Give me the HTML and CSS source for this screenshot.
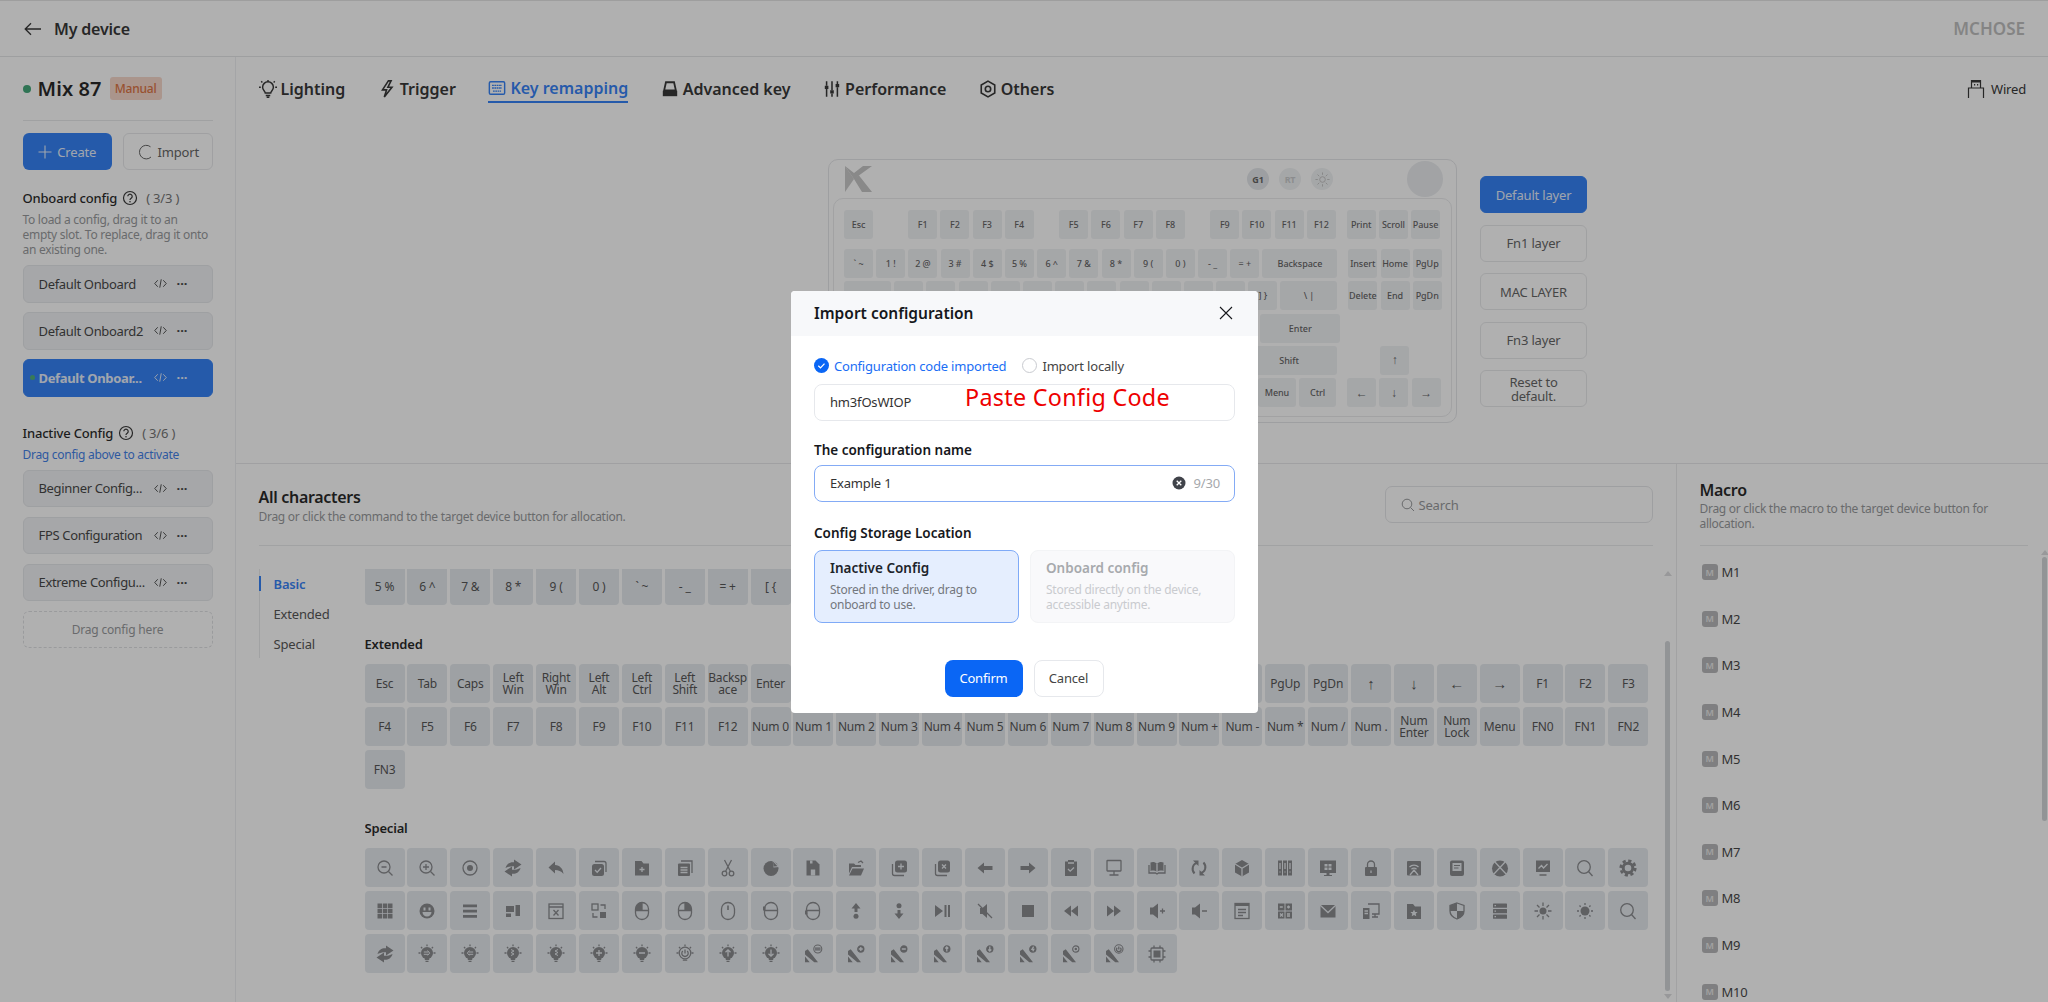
FILE: index.html
```html
<!DOCTYPE html>
<html lang="en">
<head>
<meta charset="utf-8">
<title>My device</title>
<link rel="stylesheet" href="styles.css">
</head>
<body>
<svg class="sprite" xmlns="http://www.w3.org/2000/svg">
  <symbol id="zo" viewBox="0 0 20 20"><g class="ln"><circle cx="9" cy="9" r="6"/><path d="M6.500 9h5M13.500 13.500l4 4"/></g></symbol>
  <symbol id="zi" viewBox="0 0 20 20"><g class="ln"><circle cx="9" cy="9" r="6"/><path d="M6 9h6M9 6v6M13.500 13.500l4 4"/></g></symbol>
  <symbol id="rec" viewBox="0 0 20 20"><circle class="ln" cx="10" cy="10" r="7"/><circle cx="10" cy="10" r="3"/></symbol>
  <symbol id="swirl" viewBox="0 0 20 20"><path d="M2.500 10C3.500 5.500 7.500 3.800 11 4.300V1.500L18.500 6.500 11 11.500V8.200C8 8 5.500 8.500 2.500 10z"/><path d="M17.500 10c-1 4.500-5 6.200-8.500 5.700v2.800L1.500 13.500 9 8.500v3.300c3 .2 5.500-.3 8.500-1.800z"/></symbol>
  <symbol id="reply" viewBox="0 0 20 20"><path d="M9 3.500 2.500 9.500 9 15.500V12c3.500 0 6 1 8.500 4-.5-5.500-3.500-8.500-8.500-9z"/></symbol>
  <symbol id="copychk" viewBox="0 0 20 20"><path class="ln" d="M6 3.500h9a2 2 0 0 1 2 2V14"/><rect x="3" y="6" width="12" height="12" rx="2.500"/><path class="kl" d="M6 12l2.200 2.200L12 10"/></symbol>
  <symbol id="fileplus" viewBox="0 0 20 20"><path d="M3 3h6.500l2 2.500H17V17.500H3z"/><path class="kl" d="M7.500 11.500h5M10 9v5"/></symbol>
  <symbol id="doclines" viewBox="0 0 20 20"><path class="ln" d="M6 3h11v12"/><rect x="3" y="5.500" width="12" height="12.500" rx="1"/><path class="kl" d="M5.500 9.500h7M5.500 12h7M5.500 14.500h7"/></symbol>
  <symbol id="scissors" viewBox="0 0 20 20"><g class="ln"><circle cx="6.500" cy="15.500" r="2.300"/><circle cx="13.500" cy="15.500" r="2.300"/><path d="M7.500 13.500 13.500 2M12.500 13.500 6.500 2"/></g></symbol>
  <symbol id="pie" viewBox="0 0 20 20"><circle cx="10" cy="10.500" r="7.500"/><path class="kf" d="M11.500 1.500l7 7.500-6 .5z"/><path d="M12 3.500l4.500 4.800-4 .2z"/></symbol>
  <symbol id="save" viewBox="0 0 20 20"><path d="M3.500 2.500h9l4 4v11h-13z"/><path class="kf" d="M7 2.500h2.500v3H7zM7.800 11.500h4.400v6H7.800z"/></symbol>
  <symbol id="folderopen" viewBox="0 0 20 20"><path d="M3 5.500h5l1.500 1.500H15v2H6l-3 6.500z"/><path d="M6.500 10.500H18l-3 7H3z"/><path class="ln" d="M12 4.500l3-1.500 2 2"/></symbol>
  <symbol id="addstack" viewBox="0 0 20 20"><path class="ln" d="M3.500 6v9.500a2 2 0 0 0 2 2H15"/><rect x="6" y="2.500" width="12" height="12" rx="2.500"/><path class="kl" d="M9 8.500h6M12 5.500v6"/></symbol>
  <symbol id="closestack" viewBox="0 0 20 20"><path class="ln" d="M3.500 6v9.500a2 2 0 0 0 2 2H15"/><rect x="6" y="2.500" width="12" height="12" rx="2.500"/><path class="kl" d="M10 6.500l4 4M14 6.500l-4 4"/></symbol>
  <symbol id="aleft" viewBox="0 0 20 20"><path d="M9 4.500V8h8.500v4H9v3.500L2.500 10z"/></symbol>
  <symbol id="aright" viewBox="0 0 20 20"><path d="M11 4.500V8H2.500v4H11v3.500l6.500-5.500z"/></symbol>
  <symbol id="clipchk" viewBox="0 0 20 20"><path d="M4 3.500h3V2h6v1.500h3V18H4z"/><path class="kl" d="M7 11l2.200 2.200L13 9.500M7 5h6"/></symbol>
  <symbol id="monitor" viewBox="0 0 20 20"><g class="ln"><rect x="3" y="2.500" width="14" height="10.500" rx=".5"/><path d="M10 13v3.500M5.500 17h9"/></g></symbol>
  <symbol id="book" viewBox="0 0 20 20"><path d="M10 5.500C8 3.800 5.500 3.500 3.500 4.500V13c2-.8 4.500-.6 6.500 1 2-1.600 4.500-1.800 6.500-1V4.500c-2-1-4.500-.7-6.500 1z"/><path class="ln" d="M2 7v8h6.500l1.500 1 1.500-1H18V7"/><path class="kl" d="M10 5.500V14"/></symbol>
  <symbol id="refresh" viewBox="0 0 20 20"><path d="M5.500 15.500C2 11.500 3.500 5.500 9 4.800" fill="none" stroke="currentColor" stroke-width="2"/><path d="M14.500 4.500C18 8.500 16.500 14.500 11 15.200" fill="none" stroke="currentColor" stroke-width="2"/><path d="M4 2.500h5.500v5.500zM16 17.500h-5.500V12z"/></symbol>
  <symbol id="cube" viewBox="0 0 20 20"><path d="M10 2l7 4v8.500L10 18.500 3 14.500V6z"/><path class="kl" d="M3 6l7 4.200L17 6M10 10.200v8.300"/></symbol>
  <symbol id="binders" viewBox="0 0 20 20"><path d="M3 2.500h4v15H3zM8 2.500h4v15H8zM13 2.500h4v15h-4z"/><path class="kl" d="M5 5v6M10 5v6M15 5v6M5 13.500v1M10 13.500v1M15 13.500v1"/></symbol>
  <symbol id="monwin" viewBox="0 0 20 20"><path d="M2 2.500h16v12.500H2zM8.500 15h3v2h2.500v1H6v-1h2.500z"/><path class="kf" d="M6.500 6h3v2.500h-3zM10.500 6h3v2.500h-3zM6.500 9.500h3V12h-3zM10.500 9.500h3V12h-3z"/></symbol>
  <symbol id="lock" viewBox="0 0 20 20"><path class="ln" d="M6.500 10V6.500a3.500 3.500 0 0 1 7 0V10"/><rect x="4" y="9" width="12" height="9" rx="1"/><path class="kl" d="M10 12.500v2.500"/></symbol>
  <symbol id="wificard" viewBox="0 0 20 20"><rect x="3" y="3" width="14" height="14.500" rx="1"/><path class="kl" d="M5.500 9a6.500 6.500 0 0 1 9 0M7.500 11.200a3.500 3.500 0 0 1 5 0M6 17l4-5 4 5"/></symbol>
  <symbol id="drawer" viewBox="0 0 20 20"><rect x="3" y="2.500" width="14" height="15.500" rx="2"/><path class="kf" d="M5.500 5h9v8h-9z"/><path d="M7 7h6v1H7zM7 9.500h4.500v1H7z"/></symbol>
  <symbol id="xbox" viewBox="0 0 20 20"><circle cx="10" cy="10.500" r="8"/><path class="kl" d="M4 3l6 6.500L16 3M3 17l7-7.500 7 7.500"/></symbol>
  <symbol id="chartmon" viewBox="0 0 20 20"><path d="M3 2.500h14v11.500H3z"/><path class="ln" d="M6.500 17h7"/><path class="kl" d="M5.500 10.500l3-3 2 2.500 4-4"/></symbol>
  <symbol id="search" viewBox="0 0 20 20"><g class="ln"><circle cx="9" cy="9" r="6.300"/><path d="M13.500 13.500l4 4.500"/></g></symbol>
  <symbol id="gear" viewBox="0 0 20 20"><circle cx="10" cy="10" r="4.800" fill="none" stroke="currentColor" stroke-width="3"/><circle cx="10" cy="10" r="7.300" fill="none" stroke="currentColor" stroke-width="2.600" stroke-dasharray="3.200 2.530"/></symbol>
  <symbol id="grid" viewBox="0 0 20 20"><path d="M2.500 2.500h4.500v4.500H2.500zM7.800 2.500h4.500v4.500H7.800zM13 2.500h4.500v4.500H13zM2.500 7.800h4.500v4.500H2.500zM7.800 7.800h4.500v4.500H7.800zM13 7.800h4.500v4.500H13zM2.500 13h4.500v4.500H2.500zM7.800 13h4.500v4.500H7.800zM13 13h4.500v4.500H13z"/></symbol>
  <symbol id="smile" viewBox="0 0 20 20"><circle cx="10" cy="10" r="7.500"/><path class="kf" d="M6.500 6.500h2v3h-2zM11.500 6.500h2v3h-2zM5.500 11h9a4.500 4.500 0 0 1-9 0z"/></symbol>
  <symbol id="bars" viewBox="0 0 20 20"><path d="M3 3.500h14v2.800H3zM3 8.800h14v2.800H3zM3 14h14v2.800H3z"/></symbol>
  <symbol id="layout" viewBox="0 0 20 20"><path d="M3 5h8v6H3zM12.500 4H17v11h-4.500zM3 12.500h5V16H3z"/></symbol>
  <symbol id="winx" viewBox="0 0 20 20"><g class="ln"><rect x="3" y="3" width="14" height="14.500"/><path d="M3 6h14M7.500 9l5 5.500M12.500 9l-5 5.500"/></g></symbol>
  <symbol id="swap" viewBox="0 0 20 20"><rect class="ln" x="3" y="3" width="6" height="6"/><rect x="11" y="11" width="6" height="6"/><path class="ln" d="M11.500 4h4.500v4M8.500 16H4v-4"/></symbol>
  <symbol id="mousel" viewBox="0 0 20 20"><rect class="ln" x="3.500" y="1.500" width="13" height="17" rx="6.500"/><path class="ln" d="M3.500 9.500h13M10 1.500v8"/><path d="M10 1.500v8H3.500V8A6.500 6.500 0 0 1 10 1.500z"/></symbol>
  <symbol id="mouser" viewBox="0 0 20 20"><rect class="ln" x="3.500" y="1.500" width="13" height="17" rx="6.500"/><path class="ln" d="M3.500 9.500h13M10 1.500v8"/><path d="M10 1.500v8h6.500V8A6.500 6.500 0 0 0 10 1.500z"/></symbol>
  <symbol id="mousem" viewBox="0 0 20 20"><rect class="ln" x="3.500" y="1.500" width="13" height="17" rx="6.500"/><rect x="9.200" y="4.500" width="1.600" height="4.500"/></symbol>
  <symbol id="mouseb" viewBox="0 0 20 20"><rect class="ln" x="3.500" y="1.500" width="13" height="17" rx="6.500"/><path class="ln" d="M3.500 9.500h13"/><rect x="2" y="5.500" width="2.500" height="4"/></symbol>
  <symbol id="mousef" viewBox="0 0 20 20"><rect class="ln" x="3.500" y="1.500" width="13" height="17" rx="6.500"/><path class="ln" d="M3.500 9.500h13"/><rect x="2" y="9.500" width="2.500" height="4"/></symbol>
  <symbol id="updot" viewBox="0 0 20 20"><path d="M10 2l4.500 5.500h-3V11h-3V7.500h-3z"/><circle cx="10" cy="15.200" r="2.500"/></symbol>
  <symbol id="downdot" viewBox="0 0 20 20"><circle cx="10" cy="4.800" r="2.500"/><path d="M10 18l4.500-5.500h-3V9h-3v3.500h-3z"/></symbol>
  <symbol id="playpause" viewBox="0 0 20 20"><path d="M3 4l8 6-8 6zM12.500 4h2v12h-2zM16 4h2v12h-2z"/></symbol>
  <symbol id="mute" viewBox="0 0 20 20"><path d="M5 7h2.500l4.500-4v14l-4.500-4H5z"/><path class="ln" d="M3 3l14 14"/></symbol>
  <symbol id="stop" viewBox="0 0 20 20"><rect x="4" y="4" width="12" height="12"/></symbol>
  <symbol id="prev" viewBox="0 0 20 20"><path d="M10 4.500v11L3 10zM17 4.500v11L10 10z"/></symbol>
  <symbol id="next" viewBox="0 0 20 20"><path d="M3 4.500v11L10 10zM10 4.500v11l7-5.500z"/></symbol>
  <symbol id="volp" viewBox="0 0 20 20"><path d="M3 6.500h3l5-4v15l-5-4H3z"/><path class="ln" d="M13 10h5M15.500 7.500v5"/></symbol>
  <symbol id="volm" viewBox="0 0 20 20"><path d="M3 6.500h3l5-4v15l-5-4H3z"/><path class="ln" d="M13 10h5"/></symbol>
  <symbol id="windoc" viewBox="0 0 20 20"><rect class="ln" x="3" y="2.500" width="14" height="15"/><path d="M3 2.500h14V5H3z"/><path class="ln" d="M6 8.500h8M6 11.500h8M6 14.500h5"/></symbol>
  <symbol id="calc" viewBox="0 0 20 20"><path d="M3 2.500h6.500V9.500H3zM10.500 2.500H17V9.500h-6.500zM3 10.500h6.500v7H3zM10.500 10.500H17v7h-6.500z"/><path class="kl" d="M4.800 6h3M12 6h3M13.500 4.500v3M5 12.500l3 3M8 12.500l-3 3M12 13h3M12 15h3"/></symbol>
  <symbol id="mail" viewBox="0 0 20 20"><rect x="2.500" y="4" width="15" height="12.500"/><path class="kl" d="M2 4l8 7.500L18 4"/></symbol>
  <symbol id="computers" viewBox="0 0 20 20"><path class="ln" d="M7 3h11v10h-7M14 13v2.500M11 16h6"/><path d="M2 7h6.500v11H2z"/><path class="kl" d="M3.500 10h3.500M3.500 12.500h3.500"/></symbol>
  <symbol id="folderstar" viewBox="0 0 20 20"><path d="M3 3h6l2 2.500h6V18H3z"/><path class="kf" d="M10 8.500l1.100 2.400 2.500.2-1.900 1.700.6 2.500-2.300-1.300-2.300 1.300.6-2.500-1.900-1.700 2.500-.2z"/></symbol>
  <symbol id="shield" viewBox="0 0 20 20"><path class="ln" d="M10 2l7 2.500V10c0 4-3 6.500-7 8-4-1.500-7-4-7-8V4.500z"/><path d="M10 2v8H3V4.500zM10 10h7c0 4-3 6.500-7 8z"/></symbol>
  <symbol id="server" viewBox="0 0 20 20"><rect x="3" y="2.500" width="14" height="4.300" rx=".6"/><rect x="3" y="8" width="14" height="4.300" rx=".6"/><rect x="3" y="13.500" width="14" height="4.300" rx=".6"/><path class="kf" d="M4.500 4h1.500v1.300H4.500zM4.500 9.500h1.500v1.300H4.500zM4.500 15h1.500v1.300H4.500z"/></symbol>
  <symbol id="sunb" viewBox="0 0 20 20"><circle cx="10" cy="10" r="3.500"/><path class="ln" d="M10 1.500v3.500M10 15v3.500M1.500 10H5M15 10h3.500M4 4l2.500 2.500M13.500 13.500 16 16M4 16l2.500-2.500M13.500 6.500 16 4"/></symbol>
  <symbol id="sund" viewBox="0 0 20 20"><circle cx="10" cy="10" r="4.500"/><path class="ln" d="M10 2v2M10 16v2M2 10h2M16 10h2M4.500 4.500l1.200 1.200M14.300 14.300l1.200 1.200M4.500 15.500l1.200-1.200M14.300 5.700l1.200-1.200"/></symbol>
  <symbol id="bulb" viewBox="0 0 20 20"><circle cx="10" cy="9" r="6"/><path d="M7.800 14h4.400v2H7.800zM8.500 16.800h3v1.200h-3z"/><path class="ln" d="M10 .6v1.600M1.500 9h2M16.500 9h2M4 3l1.200 1.200M16 3l-1.200 1.200"/></symbol>
  <symbol id="b1" viewBox="0 0 20 20"><use href="#bulb"/><path class="kt" d="M6.800 8h4.500M6.800 10.300h4.500M10.500 6.500l2.200 2.600-2.200 2.300"/></symbol>
  <symbol id="b2" viewBox="0 0 20 20"><use href="#bulb"/><path class="kt" d="M8.700 8h4.500M8.700 10.300h4.500M9.500 6.500L7.300 9.100l2.200 2.300"/></symbol>
  <symbol id="b3" viewBox="0 0 20 20"><use href="#bulb"/><path class="kt" d="M8 5.500l3 1.500-3 1.500 3 1.500-3 1.500"/></symbol>
  <symbol id="b4" viewBox="0 0 20 20"><use href="#bulb"/><path class="kt" d="M12 5.500 9 7l3 1.500L9 10l3 1.500"/></symbol>
  <symbol id="bplus" viewBox="0 0 20 20"><use href="#bulb"/><path class="kl" d="M7 9h6M10 6v6"/></symbol>
  <symbol id="bminus" viewBox="0 0 20 20"><use href="#bulb"/><path class="kl" d="M7 9h6"/></symbol>
  <symbol id="bpow" viewBox="0 0 20 20"><circle class="ln" cx="10" cy="9" r="5.800"/><path d="M7.800 15.500h4.400v1.300H7.800z"/><path class="ln" d="M10 .6v1.600M1.500 9h2M16.500 9h2M4 3l1.200 1.200M16 3l-1.200 1.200M7.800 7a3.200 3.200 0 1 0 4.400 0M10 5.500v4"/></symbol>
  <symbol id="bup" viewBox="0 0 20 20"><use href="#bulb"/><path class="kl" d="M10 12.500V6M7.500 8.300 10 5.800l2.500 2.500"/></symbol>
  <symbol id="bdn" viewBox="0 0 20 20"><use href="#bulb"/><path class="kl" d="M10 5.500V12M7.500 9.700 10 12.200l2.500-2.500"/></symbol>
  <symbol id="lamp" viewBox="0 0 20 20"><path d="M2 7l2.700-1.700 10.300 13h-3.700L2 10.500zM2 12.500l4.700 5.800H2z"/></symbol>
  <symbol id="lq" viewBox="0 0 20 20"><use href="#lamp"/><circle class="halo-o" cx="14.800" cy="5" r="4"/><path class="ln" d="M12 4.100h5.600M12 5.900h5.600"/></symbol>
  <symbol id="lp" viewBox="0 0 20 20"><use href="#lamp"/><circle class="halo" cx="14.800" cy="5" r="4.300"/><path class="kl" d="M12.800 5h4M14.800 3v4"/></symbol>
  <symbol id="lm" viewBox="0 0 20 20"><use href="#lamp"/><circle class="halo" cx="14.800" cy="5" r="4.300"/><path class="kl" d="M12.800 5h4"/></symbol>
  <symbol id="lu" viewBox="0 0 20 20"><use href="#lamp"/><circle class="halo" cx="14.800" cy="5" r="4.300"/><path class="kl" d="M14.800 7.500V3M13.300 4.500l1.500-1.500 1.500 1.500"/></symbol>
  <symbol id="ld" viewBox="0 0 20 20"><use href="#lamp"/><circle class="halo" cx="14.800" cy="5" r="4.300"/><path class="kl" d="M14.800 2.500V7M13.300 5.500 14.800 7l1.500-1.500"/></symbol>
  <symbol id="lz" viewBox="0 0 20 20"><use href="#lamp"/><circle class="halo" cx="14.800" cy="5" r="4.300"/><path class="kl" d="M15.600 2.700 14 5.300h1.800l-1 2"/></symbol>
  <symbol id="lo" viewBox="0 0 20 20"><use href="#lamp"/><circle class="halo" cx="14.800" cy="5" r="4.300"/><circle class="kl" cx="14.800" cy="5" r="1.900"/></symbol>
  <symbol id="lpw" viewBox="0 0 20 20"><use href="#lamp"/><circle class="halo-o" cx="14.800" cy="5" r="4.200"/><path class="ln" d="M14.800 2.500v3M13.200 3.800a2.300 2.300 0 1 0 3.200 0"/></symbol>
  <symbol id="chip" viewBox="0 0 20 20"><rect class="ln" x="4" y="4" width="12" height="12" rx="1"/><rect x="6.500" y="6.500" width="7" height="7"/><path class="ln" d="M7 1.500V4M13 1.500V4M7 16v2.500M13 16v2.500M1.500 7H4M1.500 13H4M16 7h2.500M16 13h2.500"/></symbol>
  <symbol id="codeic" viewBox="0 0 14 14"><path d="M4 3.500.8 7 4 10.500M10 3.500 13.200 7 10 10.500M7.800 2.500 6.200 11.500" fill="none" stroke="currentColor" stroke-width="1"/></symbol>
  <symbol id="help" viewBox="0 0 16 16"><circle cx="8" cy="8" r="6.500" fill="none" stroke="currentColor" stroke-width="1.200"/><path d="M5.800 6.300a2.200 2.200 0 1 1 3.400 1.900c-.8.500-1.200.9-1.200 1.800" fill="none" stroke="currentColor" stroke-width="1.200"/><circle cx="8" cy="11.800" r=".8" fill="currentColor"/></symbol>
</svg>

<div class="app">
  <header class="topbar">
    <svg class="back" viewBox="0 0 18 14" width="18" height="14"><path d="M17 7H1.500M7 1.200 1.200 7 7 12.800" fill="none" stroke="currentColor" stroke-width="1.300"/></svg>
    <span class="top-title">My device</span>
    <span class="brand">MCHOSE</span>
  </header>

  <div class="shell">
    <aside class="sidebar">
      <div class="device">
        <span class="dot"></span><span class="device-name">Mix 87</span><span class="badge">Manual</span>
      </div>
      <div class="btn-row">
        <button class="btn btn-primary"><svg viewBox="0 0 14 14" width="14" height="14"><path d="M7 .5v13M.5 7h13" fill="none" stroke="currentColor" stroke-width="1.100"/></svg>Create</button>
        <button class="btn btn-ghost"><svg viewBox="0 0 16 16" width="16" height="16"><path d="M13.500 2.800A6.800 6.800 0 1 0 14 13" fill="none" stroke="currentColor" stroke-width="1"/></svg>Import</button>
      </div>
      <div class="sec-head onboard"><b>Onboard config</b><svg class="help"><use href="#help"/></svg><span class="count">( 3/3 )</span></div>
      <p class="sec-note">To load a config, drag it to an empty slot. To replace, drag it onto an existing one.</p>
      <div class="cfg-list">
        <div class="cfg"><span class="cfg-name">Default Onboard</span><svg class="code"><use href="#codeic"/></svg><span class="more">···</span></div>
        <div class="cfg"><span class="cfg-name">Default Onboard2</span><svg class="code"><use href="#codeic"/></svg><span class="more">···</span></div>
        <div class="cfg cfg-on"><i class="cfg-dot"></i><span class="cfg-name">Default Onboar...</span><svg class="code"><use href="#codeic"/></svg><span class="more">···</span></div>
      </div>
      <div class="sec-head inactive"><b>Inactive Config</b><svg class="help"><use href="#help"/></svg><span class="count">( 3/6 )</span></div>
      <p class="sec-link">Drag config above to activate</p>
      <div class="cfg-list">
        <div class="cfg"><span class="cfg-name">Beginner Config...</span><svg class="code"><use href="#codeic"/></svg><span class="more">···</span></div>
        <div class="cfg"><span class="cfg-name">FPS Configuration</span><svg class="code"><use href="#codeic"/></svg><span class="more">···</span></div>
        <div class="cfg"><span class="cfg-name">Extreme Configu...</span><svg class="code"><use href="#codeic"/></svg><span class="more">···</span></div>
        <div class="cfg-drop">Drag config here</div>
      </div>
    </aside>

    <main class="main">
      <section class="upper">
        <nav class="tabs">
          <span class="tab"><svg viewBox="0 0 20 20" width="18" height="18" class="tab-ic"><path d="M7 14.500c0-2-3-3-3-6.500a6 6 0 0 1 12 0c0 3.500-3 4.500-3 6.500zM7.500 17.200h5M8.500 19.200h3M10 0v1.500M2.500 1.500l1.200 1.200M17.500 1.500l-1.200 1.200M0 8h2M18 8h2" fill="none" stroke="currentColor" stroke-width="1.600"/></svg>Lighting</span>
          <span class="tab"><svg viewBox="0 0 20 20" width="18" height="18" class="tab-ic"><path d="M11.500 1 5 11h4.500L7 19 15.500 8H11l3.500-7z" fill="none" stroke="currentColor" stroke-width="1.800"/></svg>Trigger</span>
          <span class="tab tab-on"><svg viewBox="0 0 20 20" width="18" height="18" class="tab-ic"><rect x="1.500" y="3" width="17" height="14" rx="1.500" fill="none" stroke="currentColor" stroke-width="1.600"/><path d="M4.500 7h11M4.500 10h11M5.500 13.500h9" fill="none" stroke="currentColor" stroke-width="1.400" stroke-dasharray="2 .6"/></svg>Key remapping</span>
          <span class="tab"><svg viewBox="0 0 20 20" width="18" height="18" class="tab-ic"><path d="M5.500 2.500h9l2 9h-13z" fill="none" stroke="currentColor" stroke-width="2"/><path d="M2 12h16v6H2z" fill="currentColor"/></svg>Advanced key</span>
          <span class="tab"><svg viewBox="0 0 20 20" width="18" height="18" class="tab-ic"><path d="M4 1.500v5M4 10v8.500M10 1.500v10M10 15v3.500M16 1.500v3M16 8v10.500" fill="none" stroke="currentColor" stroke-width="1.700"/><path d="M2 6.500h4V10H2zM8 11.500h4V15H8zM14 4.500h4V8h-4z" fill="currentColor"/></svg>Performance</span>
          <span class="tab"><svg viewBox="0 0 20 20" width="18" height="18" class="tab-ic"><path d="M10 1.200 17.500 5.500v9L10 18.800l-7.500-4.300v-9z" fill="none" stroke="currentColor" stroke-width="1.800"/><circle cx="10" cy="10" r="3" fill="none" stroke="currentColor" stroke-width="1.800"/></svg>Others</span>
          <span class="wired"><svg viewBox="0 0 18 20" width="18" height="20"><path d="M1.500 19V9h15v10M4.500 9V1.500h9V9" fill="none" stroke="currentColor" stroke-width="1.200"/><path d="M4.500 1.500h9v2h-9zM7 5h1.200v1.500H7zM10 5h1.200v1.500H10z" fill="currentColor"/></svg>Wired</span>
        </nav>
        <div class="stage">
          <div class="keyboard">
            <div class="kb-top">
              <svg class="kb-logo" viewBox="0 0 28 26" width="28" height="26"><path d="M0 0l9 13-9 13z" class="logo-a"/><path d="M0 0h0L9 13 27 0H18L9 7zM9 13l8 13h10L14 9.500z" class="logo-b"/></svg>
              <span class="kb-spacer"></span>
              <span class="kb-pill kb-g1">G1</span>
              <span class="kb-pill kb-rt">RT</span>
              <span class="kb-pill kb-sun"><svg viewBox="0 0 16 16" width="15" height="15"><circle cx="8" cy="8" r="3" fill="none" stroke="currentColor"/><path d="M8 .5v2.500M8 13v2.500M.5 8H3M13 8h2.500M2.700 2.700l1.800 1.800M11.500 11.500l1.800 1.800M2.700 13.300l1.800-1.800M11.500 4.500l1.800-1.800" stroke="currentColor"/></svg></span>
              <span class="kb-knob"></span>
            </div>
            <div class="kb-plate">
              <div class="kb-row"><span class="k">Esc</span><span class="k ml-a">F1</span><span class="k">F2</span><span class="k">F3</span><span class="k">F4</span><span class="k ml-b">F5</span><span class="k">F6</span><span class="k">F7</span><span class="k">F8</span><span class="k ml-b">F9</span><span class="k">F10</span><span class="k">F11</span><span class="k">F12</span><span class="k ml-n">Print</span><span class="k">Scroll</span><span class="k">Pause</span></div>
              <div class="kb-row r2"><span class="k">` ~</span><span class="k">1 !</span><span class="k">2 @</span><span class="k">3 #</span><span class="k">4 $</span><span class="k">5 %</span><span class="k">6 ^</span><span class="k">7 &amp;</span><span class="k">8 *</span><span class="k">9 (</span><span class="k">0 )</span><span class="k">- _</span><span class="k">= +</span><span class="k w-bs">Backspace</span><span class="k ml-n">Insert</span><span class="k">Home</span><span class="k">PgUp</span></div>
              <div class="kb-row"><span class="k w-tab">Tab</span><span class="k">Q</span><span class="k">W</span><span class="k">E</span><span class="k">R</span><span class="k">T</span><span class="k">Y</span><span class="k">U</span><span class="k">I</span><span class="k">O</span><span class="k">P</span><span class="k">[ {</span><span class="k">] }</span><span class="k w-bsl">\ |</span><span class="k ml-n">Delete</span><span class="k">End</span><span class="k">PgDn</span></div>
              <div class="kb-row"><span class="k w-caps">Caps</span><span class="k">A</span><span class="k">S</span><span class="k">D</span><span class="k">F</span><span class="k">G</span><span class="k">H</span><span class="k">J</span><span class="k">K</span><span class="k">L</span><span class="k">; :</span><span class="k">' "</span><span class="k w-ent">Enter</span></div>
              <div class="kb-row"><span class="k w-shl">Shift</span><span class="k">Z</span><span class="k">X</span><span class="k">C</span><span class="k">V</span><span class="k">B</span><span class="k">N</span><span class="k">M</span><span class="k">, &lt;</span><span class="k">. &gt;</span><span class="k">/ ?</span><span class="k w-shr">Shift</span><span class="k ml-up k-ar">↑</span></div>
              <div class="kb-row"><span class="k w-mod">Ctrl</span><span class="k w-mod">Win</span><span class="k w-mod">Alt</span><span class="k w-space">Space</span><span class="k w-mod">Alt</span><span class="k w-mod">Fn</span><span class="k w-mod">Menu</span><span class="k w-mod">Ctrl</span><span class="k ml-n k-ar">←</span><span class="k k-ar">↓</span><span class="k k-ar">→</span></div>
            </div>
          </div>
          <div class="layers">
            <button class="layer layer-on">Default layer</button>
            <button class="layer">Fn1 layer</button>
            <button class="layer">MAC LAYER</button>
            <button class="layer">Fn3 layer</button>
            <button class="layer">Reset to default.</button>
          </div>
        </div>
      </section>

      <section class="lower">
        <div class="chars">
          <div class="chars-head">
            <div><h2 class="h2">All characters</h2><p class="sub">Drag or click the command to the target device button for allocation.</p></div>
            <div class="search"><svg viewBox="0 0 14 14" width="14" height="14"><circle cx="6" cy="6" r="4.800" fill="none" stroke="currentColor"/><path d="M9.500 9.500l3.500 3.500" stroke="currentColor"/></svg>Search</div>
          </div>
          <div class="chars-body">
            <ul class="side">
              <li class="side-on">Basic</li>
              <li>Extended</li>
              <li>Special</li>
            </ul>
            <div class="pane">
              <div class="keys clip"><span class="key">5 %</span><span class="key">6 ^</span><span class="key">7 &amp;</span><span class="key">8 *</span><span class="key">9 (</span><span class="key">0 )</span><span class="key">` ~</span><span class="key">- _</span><span class="key">= +</span><span class="key">[ {</span></div>
              <h3 class="h3 h-ext">Extended</h3>
              <div class="keys">
                <span class="key">Esc</span><span class="key">Tab</span><span class="key">Caps</span><span class="key">Left<br>Win</span><span class="key">Right<br>Win</span><span class="key">Left<br>Alt</span><span class="key">Left<br>Ctrl</span><span class="key">Left<br>Shift</span><span class="key">Backsp<br>ace</span><span class="key">Enter</span><span class="key">Space</span><span class="key">Right<br>Alt</span><span class="key">Right<br>Ctrl</span><span class="key">Right<br>Shift</span><span class="key">Print</span><span class="key">Scroll</span><span class="key">Pause</span><span class="key">Insert</span><span class="key">Home</span><span class="key">Delete</span><span class="key">End</span><span class="key">PgUp</span><span class="key">PgDn</span><span class="key key-ar">↑</span><span class="key key-ar">↓</span><span class="key key-ar">←</span><span class="key key-ar">→</span><span class="key">F1</span><span class="key">F2</span><span class="key">F3</span>
                <span class="key">F4</span><span class="key">F5</span><span class="key">F6</span><span class="key">F7</span><span class="key">F8</span><span class="key">F9</span><span class="key">F10</span><span class="key">F11</span><span class="key">F12</span><span class="key">Num 0</span><span class="key">Num 1</span><span class="key">Num 2</span><span class="key">Num 3</span><span class="key">Num 4</span><span class="key">Num 5</span><span class="key">Num 6</span><span class="key">Num 7</span><span class="key">Num 8</span><span class="key">Num 9</span><span class="key">Num +</span><span class="key">Num -</span><span class="key">Num *</span><span class="key">Num /</span><span class="key">Num .</span><span class="key">Num<br>Enter</span><span class="key">Num<br>Lock</span><span class="key">Menu</span><span class="key">FN0</span><span class="key">FN1</span><span class="key">FN2</span>
                <span class="key">FN3</span>
              </div>
              <h3 class="h3 h-spec">Special</h3>
              <div class="keys icons">
                <span class="key"><svg><use href="#zo"/></svg></span><span class="key"><svg><use href="#zi"/></svg></span><span class="key"><svg><use href="#rec"/></svg></span><span class="key"><svg><use href="#swirl"/></svg></span><span class="key"><svg><use href="#reply"/></svg></span><span class="key"><svg><use href="#copychk"/></svg></span><span class="key"><svg><use href="#fileplus"/></svg></span><span class="key"><svg><use href="#doclines"/></svg></span><span class="key"><svg><use href="#scissors"/></svg></span><span class="key"><svg><use href="#pie"/></svg></span><span class="key"><svg><use href="#save"/></svg></span><span class="key"><svg><use href="#folderopen"/></svg></span><span class="key"><svg><use href="#addstack"/></svg></span><span class="key"><svg><use href="#closestack"/></svg></span><span class="key"><svg><use href="#aleft"/></svg></span><span class="key"><svg><use href="#aright"/></svg></span><span class="key"><svg><use href="#clipchk"/></svg></span><span class="key"><svg><use href="#monitor"/></svg></span><span class="key"><svg><use href="#book"/></svg></span><span class="key"><svg><use href="#refresh"/></svg></span><span class="key"><svg><use href="#cube"/></svg></span><span class="key"><svg><use href="#binders"/></svg></span><span class="key"><svg><use href="#monwin"/></svg></span><span class="key"><svg><use href="#lock"/></svg></span><span class="key"><svg><use href="#wificard"/></svg></span><span class="key"><svg><use href="#drawer"/></svg></span><span class="key"><svg><use href="#xbox"/></svg></span><span class="key"><svg><use href="#chartmon"/></svg></span><span class="key"><svg><use href="#search"/></svg></span><span class="key"><svg><use href="#gear"/></svg></span>
                <span class="key"><svg><use href="#grid"/></svg></span><span class="key"><svg><use href="#smile"/></svg></span><span class="key"><svg><use href="#bars"/></svg></span><span class="key"><svg><use href="#layout"/></svg></span><span class="key"><svg><use href="#winx"/></svg></span><span class="key"><svg><use href="#swap"/></svg></span><span class="key"><svg><use href="#mousel"/></svg></span><span class="key"><svg><use href="#mouser"/></svg></span><span class="key"><svg><use href="#mousem"/></svg></span><span class="key"><svg><use href="#mouseb"/></svg></span><span class="key"><svg><use href="#mousef"/></svg></span><span class="key"><svg><use href="#updot"/></svg></span><span class="key"><svg><use href="#downdot"/></svg></span><span class="key"><svg><use href="#playpause"/></svg></span><span class="key"><svg><use href="#mute"/></svg></span><span class="key"><svg><use href="#stop"/></svg></span><span class="key"><svg><use href="#prev"/></svg></span><span class="key"><svg><use href="#next"/></svg></span><span class="key"><svg><use href="#volp"/></svg></span><span class="key"><svg><use href="#volm"/></svg></span><span class="key"><svg><use href="#windoc"/></svg></span><span class="key"><svg><use href="#calc"/></svg></span><span class="key"><svg><use href="#mail"/></svg></span><span class="key"><svg><use href="#computers"/></svg></span><span class="key"><svg><use href="#folderstar"/></svg></span><span class="key"><svg><use href="#shield"/></svg></span><span class="key"><svg><use href="#server"/></svg></span><span class="key"><svg><use href="#sunb"/></svg></span><span class="key"><svg><use href="#sund"/></svg></span><span class="key"><svg><use href="#search"/></svg></span>
                <span class="key"><svg><use href="#swirl"/></svg></span><span class="key"><svg><use href="#b1"/></svg></span><span class="key"><svg><use href="#b2"/></svg></span><span class="key"><svg><use href="#b3"/></svg></span><span class="key"><svg><use href="#b4"/></svg></span><span class="key"><svg><use href="#bplus"/></svg></span><span class="key"><svg><use href="#bminus"/></svg></span><span class="key"><svg><use href="#bpow"/></svg></span><span class="key"><svg><use href="#bup"/></svg></span><span class="key"><svg><use href="#bdn"/></svg></span><span class="key"><svg><use href="#lq"/></svg></span><span class="key"><svg><use href="#lp"/></svg></span><span class="key"><svg><use href="#lm"/></svg></span><span class="key"><svg><use href="#lu"/></svg></span><span class="key"><svg><use href="#ld"/></svg></span><span class="key"><svg><use href="#lz"/></svg></span><span class="key"><svg><use href="#lo"/></svg></span><span class="key"><svg><use href="#lpw"/></svg></span><span class="key"><svg><use href="#chip"/></svg></span>
              </div>
            </div>
          </div>
          <div class="scroll scroll-chars"><i class="arrow-up"></i><i class="thumb"></i><i class="arrow-down"></i></div>
        </div>
        <aside class="macro">
          <div class="macro-head"><h2 class="h2 h2-m">Macro</h2><p class="sub">Drag or click the macro to the target device button for allocation.</p></div>
          <ul class="macro-list">
            <li><span class="m">M</span>M1</li>
            <li><span class="m">M</span>M2</li>
            <li><span class="m">M</span>M3</li>
            <li><span class="m">M</span>M4</li>
            <li><span class="m">M</span>M5</li>
            <li><span class="m">M</span>M6</li>
            <li><span class="m">M</span>M7</li>
            <li><span class="m">M</span>M8</li>
            <li><span class="m">M</span>M9</li>
            <li><span class="m">M</span>M10</li>
          </ul>
          <div class="scroll scroll-macro"><i class="arrow-up"></i><i class="thumb"></i></div>
        </aside>
      </section>
    </main>
  </div>
</div>

<div class="mask">
  <div class="modal">
    <div class="modal-head"><span>Import configuration</span><svg viewBox="0 0 14 14" width="14" height="14"><path d="M1 1l12 12M13 1 1 13" fill="none" stroke="currentColor" stroke-width="1.100"/></svg></div>
    <div class="modal-body">
      <div class="radios">
        <span class="radio radio-on"><svg viewBox="0 0 15 15" width="15" height="15"><circle cx="7.500" cy="7.500" r="7.500" fill="#0a66f5"/><path d="M4.300 7.800l2.200 2.100 4-4.300" fill="none" stroke="#fff" stroke-width="1.300"/></svg>Configuration code imported</span>
        <span class="radio"><i class="radio-off"></i>Import locally</span>
      </div>
      <div class="field field-code">hm3fOsWIOP<span class="note">Paste Config Code</span></div>
      <div class="label lbl-name">The configuration name</div>
      <div class="field field-name">Example 1<span class="field-end"><svg viewBox="0 0 14 14" width="14" height="14"><circle cx="7" cy="7" r="6.500" fill="#40434a"/><path d="M4.700 4.700l4.600 4.600M9.300 4.700 4.700 9.300" stroke="#fff" stroke-width="1.300"/></svg><em>9/30</em></span></div>
      <div class="label lbl-store">Config Storage Location</div>
      <div class="stores">
        <div class="store store-on"><h4>Inactive Config</h4><p>Stored in the driver, drag to onboard to use.</p></div>
        <div class="store store-off"><h4>Onboard config</h4><p>Stored directly on the device, accessible anytime.</p></div>
      </div>
      <div class="actions"><button class="mbtn mbtn-ok">Confirm</button><button class="mbtn mbtn-no">Cancel</button></div>
    </div>
  </div>
</div>
</body>
</html>
```

FILE: styles.css
```css
* { box-sizing: border-box; }
html, body { margin: 0; padding: 0; width: 2048px; height: 1002px; overflow: hidden; background: #fff; }
body { position: relative; font-family: "Noto Sans", "Liberation Sans", sans-serif; color: #111; --k: #e3e7ec; letter-spacing: -.18px; }
h2, h3, h4, p, ul { margin: 0; padding: 0; list-style: none; }
button { font: inherit; letter-spacing: inherit; cursor: default; }
.sprite { position: absolute; width: 0; height: 0; overflow: hidden; }
.ln { fill: none; stroke: currentColor; stroke-width: 1.300; }
.kl { fill: none; stroke: var(--k); stroke-width: 1.300; }
.kt { fill: none; stroke: var(--k); stroke-width: 1; }
.kf { fill: var(--k); }
.halo { fill: currentColor; stroke: var(--k); stroke-width: 1.200; }
.halo-o { fill: var(--k); stroke: currentColor; stroke-width: 1.100; }

.app { display: flex; flex-direction: column; height: 1002px; border-top: 1px solid #e2e2e2; }
.topbar { display: flex; align-items: center; flex: 0 0 56px; padding: 0 23px 0 24px; border-bottom: 1px solid #e3e4e6; }
.back { color: #222; }
.top-title { margin-left: 12px; font-size: 16px; font-weight: 600; color: #222; }
.brand { margin-left: auto; font-size: 17px; font-weight: 600; color: #b9b9b9; letter-spacing: 0; }
.shell { display: flex; flex: 1; min-height: 0; }

.sidebar { flex: 0 0 235px; padding: 0 22px 0 22.500px; border-right: 1px solid #eceef0; }
.device { display: flex; align-items: center; height: 64px; border-bottom: 1px solid #e6e7e9; }
.dot { width: 8px; height: 8px; border-radius: 50%; background: #2f9e6b; }
.device-name { margin-left: 7px; font-size: 20px; font-weight: 600; color: #111; letter-spacing: .1px; }
.badge { margin-left: 8px; padding: 0 5px; height: 23px; line-height: 23px; border-radius: 3px; background: #f6d3c6; color: #d9662f; font-size: 12px; font-weight: 500; }
.btn-row { display: flex; gap: 11px; margin-top: 12px; }
.btn { flex: 0 0 89.500px; display: flex; align-items: center; justify-content: center; gap: 5px; height: 37px; border-radius: 6px; font-size: 13px; }
.btn-primary { background: #1f75f5; color: #e6eefb; border: 0; }
.btn-ghost { background: #fff; border: 1px solid #e5e6e9; color: #555; }
.sec-head { display: flex; align-items: center; height: 20px; font-size: 13px; }
.sec-head b { font-weight: 500; color: #111; }
.onboard { margin-top: 18px; }
.inactive { margin-top: 26px; }
.help { width: 16px; height: 16px; margin-left: 5px; color: #222; }
.count { margin-left: 8px; color: #666; font-size: 13px; }
.sec-note { margin-top: 4px; font-size: 12px; line-height: 15px; color: #8d8f92; letter-spacing: -.28px; }
.sec-link { margin-top: 4px; font-size: 12px; line-height: 15px; color: #2e73e6; letter-spacing: -.28px; }
.cfg-list { display: flex; flex-direction: column; gap: 9.500px; margin-top: 8px; }
.cfg { position: relative; display: flex; align-items: center; height: 37.500px; padding-left: 15px; border: 1px solid #e3e5e8; border-radius: 6px; background: #eff1f4; font-size: 13px; color: #333; letter-spacing: -.34px; }
.cfg-name { flex: 0 0 116px; white-space: nowrap; overflow: hidden; }
.code { width: 13px; height: 13px; margin-left: -1px; color: #333; }
.more { margin-left: 10px; font-size: 13px; letter-spacing: 0; line-height: 1; font-weight: 700; }
.cfg-on { background: #1f75f5; border-color: #1f75f5; color: #e6eefb; font-weight: 700; }
.cfg-on .code { color: #e6eefb; }
.cfg-dot { position: absolute; left: 6px; top: 15px; width: 5px; height: 5px; border-radius: 50%; background: #3ea96f; }
.cfg-drop { display: flex; align-items: center; justify-content: center; height: 37.500px; border: 1px dashed #dcdde0; border-radius: 6px; font-size: 12px; color: #8d8f92; }

.main { flex: 1; display: flex; flex-direction: column; min-width: 0; }
.upper { flex: 0 0 407px; border-bottom: 1px solid #e5e6e8; }
.tabs { display: flex; align-items: flex-start; height: 65px; padding: 20px 22px 0 23px; gap: 32.500px; letter-spacing: 0; }
.tab { display: flex; align-items: center; gap: 4px; height: 24px; font-size: 16px; font-weight: 600; color: #222; }
.tab-on { color: #1f75f5; border-bottom: 2px solid #1f75f5; height: 26px; padding-bottom: 2px; }
.tab-ic { flex: none; }
.wired { margin-left: auto; display: flex; align-items: center; gap: 6px; font-size: 13px; height: 24px; color: #222; letter-spacing: -.18px; }

.stage { display: flex; margin-top: 37px; padding-left: 592.500px; align-items: flex-start; }
.keyboard { width: 629px; height: 264px; padding: 0 4px 5px 4px; border: 1px solid #e3e4e7; border-radius: 10px; display: flex; flex-direction: column; }
.kb-top { display: flex; align-items: center; height: 38px; flex: none; padding-left: 12px; }
.kb-logo { flex: none; margin-top: -1px; }
.logo-a { fill: #c6c6c6; }
.logo-b { fill: #c0c0c0; }
.kb-spacer { flex: 1; }
.kb-pill { display: flex; align-items: center; justify-content: center; width: 22px; height: 22px; border-radius: 50%; margin-left: 10px; font-size: 9px; font-weight: 700; background: #eef0f2; color: #c4c6c8; }
.kb-g1 { background: #e1e4e8; color: #555; }
.kb-sun { color: #bbb; margin-right: 119px; }
.kb-knob { position: absolute; width: 36px; height: 36px; margin-left: 0; border-radius: 50%; background: #e8eaed; left: 1407px; top: 161px; }
.kb-plate { flex: 1; padding: 11px 10px 0; border: 1px solid #e8e9eb; border-radius: 10px; }
.kb-row { display: flex; gap: 3.200px; margin-bottom: 3.300px; white-space: nowrap; }
.r2 { margin-top: 10px; }
.k { flex: 0 0 29px; height: 29px; display: flex; align-items: center; justify-content: center; background: #eef0f3; border-radius: 3px; font-size: 9px; font-weight: 500; color: #555; white-space: nowrap; overflow: hidden; letter-spacing: -.05px; }
.k-ar { font-family: "Liberation Sans", sans-serif; font-size: 12px; }
.ml-a { margin-left: 32px; }
.ml-b { margin-left: 22.300px; }
.ml-n { margin-left: 7.700px; }
.ml-up { margin-left: 39.900px; }
.w-bs { flex-basis: 75px; }
.w-tab { flex-basis: 47px; }
.w-bsl { flex-basis: 57px; }
.w-caps { flex-basis: 59px; }
.w-ent { flex-basis: 80px; }
.w-shl { flex-basis: 72px; }
.w-shr { flex-basis: 96px; }
.w-mod { flex-basis: 37.500px; }
.w-space { flex-basis: 207.600px; }
.layers { display: flex; flex-direction: column; gap: 11.500px; margin: 17px 0 0 23px; width: 107px; }
.layer { height: 37px; border: 1px solid #e6e7e9; border-radius: 6px; background: #fff; color: #555; font-size: 13px; line-height: 14px; padding: 0 8px; }
.layer-on { background: #1f75f5; border-color: #1f75f5; color: #e3ecfb; }

.lower { flex: 1; display: flex; min-height: 0; }
.chars { position: relative; flex: 0 0 1441px; padding: 0 23px; border-right: 1px solid #e8e9eb; display: flex; flex-direction: column; }
.chars-head { display: flex; justify-content: space-between; align-items: flex-start; height: 82px; padding-top: 22px; border-bottom: 1px solid #e7e8ea; flex: none; }
.h2 { font-size: 16px; font-weight: 600; line-height: 23px; color: #111; letter-spacing: -.3px; }
.sub { font-size: 12px; line-height: 15px; color: #8d8f92; letter-spacing: -.28px; }
.search { display: flex; align-items: center; gap: 4px; width: 268px; height: 37px; padding-left: 15px; border: 1px solid #e3e4e7; border-radius: 7px; font-size: 13px; color: #8d8f92; }
.chars-body { display: flex; flex: 1; min-height: 0; padding-top: 22.500px; }
.side { flex: 0 0 106px; height: 89px; border-left: 1px solid #e7e8ea; font-size: 13px; color: #444; position: relative; }
.side li { height: 30px; line-height: 30px; padding-left: 14px; }
.side-on { color: #1f75f5; font-weight: 600; }
.side-on::before { content: ""; position: absolute; left: -1px; top: 7px; height: 15px; width: 2px; background: #1f75f5; }
.pane { flex: 1; overflow: hidden; }
.keys { display: grid; grid-template-columns: repeat(30, 40px); gap: 4px 2.900px; }
.key { display: flex; align-items: center; justify-content: center; text-align: center; height: 39px; background: #e3e7ec; border-radius: 4px; font-size: 12px; line-height: 11.500px; color: #444; white-space: nowrap; overflow: hidden; }
.key-ar { font-family: "Liberation Sans", sans-serif; font-size: 15px; }
.clip .key { height: 36px; border-radius: 0 0 4px 4px; }
.key svg { flex: none; width: 20px; height: 20px; color: #7c7e82; fill: currentColor; }
.h3 { font-size: 13px; font-weight: 600; line-height: 20px; color: #111; }
.h-ext { margin: 29.500px 0 10px; }
.h-spec { margin: 29px 0 10px; }
.scroll { position: absolute; width: 5px; }
.scroll i { display: block; position: absolute; }
.thumb { left: 0; width: 5px; background: #cfd2d6; border-radius: 3px; }
.arrow-up { left: -1px; width: 0; height: 0; border: 4px solid transparent; border-top: 0; border-bottom: 5px solid #d8d9db; border-radius: 0; }
.arrow-down { left: -1px; width: 0; height: 0; border: 4px solid transparent; border-bottom: 0; border-top: 5px solid #d8d9db; }
.scroll-chars { left: 1429px; top: 0; bottom: 0; }
.scroll-chars .arrow-up { top: 107px; }
.scroll-chars .thumb { top: 177px; height: 350px; }
.scroll-chars .arrow-down { top: 530px; }

.macro { position: relative; flex: 1; padding-left: 23px; min-width: 0; }
.macro-head { width: 328px; height: 82px; padding-top: 16px; border-bottom: 1px solid #e7e8ea; }
.h2-m { line-height: 21px; }
.macro-list { padding-top: 3px; }
.macro-list li { display: flex; align-items: center; height: 46.600px; font-size: 13px; color: #333; }
.m { display: flex; align-items: center; justify-content: center; width: 16px; height: 16px; margin: 0 4px 0 2px; border-radius: 3px; background: #b1b1b3; color: #e8e8e8; font-size: 9px; font-weight: 600; }
.scroll-macro { left: 365px; top: 0; bottom: 0; }
.scroll-macro .arrow-up { top: 86px; }
.scroll-macro .thumb { top: 93px; height: 264px; }

.mask { position: absolute; inset: 0; display: flex; align-items: center; justify-content: center; padding-left: 1px; padding-top: 1px; background: rgba(48, 48, 48, .38); }
.modal { width: 467px; height: 422px; border-radius: 4px; background: #fff; overflow: hidden; }
.modal-head { display: flex; align-items: center; justify-content: space-between; height: 45px; padding: 0 25px 0 23px; background: #f7f8fa; font-size: 15.500px; font-weight: 600; color: #16181c; letter-spacing: 0; }
.modal-body { padding: 0 23px; }
.radios { display: flex; gap: 16px; align-items: center; height: 20px; margin-top: 20px; font-size: 13px; color: #444; }
.radio { display: flex; align-items: center; gap: 5px; }
.radio-on { color: #1a6ef5; }
.radio-off { width: 15px; height: 15px; border: 1px solid #c9cbd0; border-radius: 50%; }
.field { position: relative; display: flex; align-items: center; height: 37px; padding-left: 15px; border: 1px solid #e6e8ec; border-radius: 8px; font-size: 13px; color: #333; }
.field-code { margin-top: 8px; }
.field-name { margin-top: 5px; border-color: #84abf5; }
.note { position: absolute; left: 150px; top: -3px; font-size: 23.300px; line-height: 30px; color: #ee0000; white-space: nowrap; letter-spacing: .3px; }
.field-end { margin-left: auto; display: flex; align-items: center; gap: 8px; padding-right: 14px; }
.field-end em { font-style: normal; color: #a6a8ac; font-size: 13px; }
.label { height: 20px; line-height: 20px; font-size: 13.500px; font-weight: 600; color: #16181c; letter-spacing: 0; }
.lbl-name { margin-top: 19px; }
.lbl-store { margin-top: 21px; }
.stores { display: grid; grid-template-columns: 205px 205px; gap: 11px; margin-top: 7px; }
.store { height: 73px; padding: 7px 15px 0; border: 1px solid #f3f4f6; border-radius: 8px; background: #f9f9fb; }
.store h4 { font-size: 13.500px; line-height: 20px; font-weight: 600; color: #a7a9ad; letter-spacing: 0; }
.store p { margin-top: 4px; font-size: 12px; line-height: 15px; color: #c9cbcf; letter-spacing: -.25px; }
.store-on { background: #e5eefe; border-color: #7faaf7; }
.store-on h4 { color: #20242a; }
.store-on p { color: #73777d; }
.actions { display: flex; justify-content: center; gap: 11px; margin-top: 37px; padding-right: 1px; }
.mbtn { height: 37px; border-radius: 8px; font-size: 13px; }
.mbtn-ok { width: 78px; background: #0a66f5; color: #fff; border: 0; }
.mbtn-no { width: 70px; background: #fff; color: #444; border: 1px solid #e6e8ec; }
```
